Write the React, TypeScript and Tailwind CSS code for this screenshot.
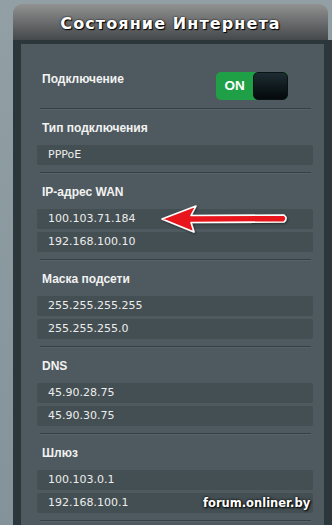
import React from "react";

const label = "text-[12px] leading-[15px] font-bold text-[#f2f2f2] [font-family:'Liberation_Sans',Arial,sans-serif]";
const value = "text-[11px] text-[#ececec] [font-family:'DejaVu_Sans',Verdana,sans-serif]";

function Sep() {
  return <div className="mx-[13px] ml-[19px] h-[2px] border-t border-[#363f43] border-b border-b-[#56636a]" />;
}

function Box({ v }: { v: string }) {
  return (
    <div className={`ml-[16px] mr-[11px] h-[20px] rounded-[2px] bg-[#444f53] pl-[11px] flex items-center ${value}`}>
      {v}
    </div>
  );
}

function Section({ title, values }: { title: string; values: string[] }) {
  return (
    <>
      <div className="pt-[11px] pb-[7px]">
        <div className={`pl-[21px] mb-[9px] ${label}`}>{title}</div>
        <div className="flex flex-col gap-[3px]">
          {values.map((v) => (
            <Box key={v} v={v} />
          ))}
        </div>
      </div>
      <Sep />
    </>
  );
}

export default function App() {
  return (
    <div className="relative w-[332px] h-[525px] overflow-hidden bg-gradient-to-b from-[#92a0a5] to-[#84939a]">
      <div className="ml-[13px] pt-[4px]">
        <div className="h-[36px] w-[315px] rounded-t-[9px] bg-gradient-to-b from-[#929292] via-[#6b6c6d] to-[#45494b] flex items-center justify-center pt-[3px]">
          <span className="text-[16px] font-bold tracking-[1.1px] text-white [text-shadow:1px_1px_1px_#000,0_0_2px_#000] [font-family:'DejaVu_Sans',Verdana,sans-serif]">
            Состояние Интернета
          </span>
        </div>
        <div className="bg-[#2c373b] pl-[8px] pt-[4px] h-[500px] w-[319px]">
          <div className="w-[303px] h-[496px] bg-[#4e5a5f]">
            <div className="pt-[28px] pb-[8px] pl-[21px] flex items-start">
              <div className={label}>Подключение</div>
              <div className="ml-auto mr-[36px] w-[72px] h-[28px] rounded-[5px] bg-[#1fa046] flex items-center">
                <span className="w-[37px] text-center text-[13.5px] font-bold text-white [font-family:'Liberation_Sans',Arial,sans-serif]">
                  ON
                </span>
                <div className="w-[35px] h-[28px] rounded-[5px] bg-gradient-to-b from-[#1d2d33] to-[#05090b] border border-[#0a1215]" />
              </div>
            </div>
            <Sep />
            <Section title="Тип подключения" values={["PPPoE"]} />
            <Section title="IP-адрес WAN" values={["100.103.71.184", "192.168.100.10"]} />
            <Section title="Маска подсети" values={["255.255.255.255", "255.255.255.0"]} />
            <Section title="DNS" values={["45.90.28.75", "45.90.30.75"]} />
            <Section title="Шлюз" values={["100.103.0.1", "192.168.100.1"]} />
          </div>
        </div>
      </div>

      <svg className="absolute left-0 top-0 pointer-events-none" width="332" height="525" viewBox="0 0 332 525">
        <defs>
          <filter id="sh" x="-10%" y="-30%" width="120%" height="160%">
            <feDropShadow dx="1" dy="1" stdDeviation="1" floodColor="#000" floodOpacity="0.45" />
          </filter>
        </defs>
        <path
          d="M162 219 L196 206 L191 215.5 L284 215 Q288 218.5 284 222 L191 222.5 L194 232 Z"
          fill="#e8161b"
          stroke="#ffffff"
          strokeWidth="1.6"
          strokeLinejoin="round"
          filter="url(#sh)"
        />
      </svg>

      <div className="absolute left-[203px] top-[495px] text-[11.5px] font-bold text-white [text-shadow:1px_1px_2px_#000,0_0_3px_#000] [font-family:'DejaVu_Sans',Verdana,sans-serif]">
        forum.onliner.by
      </div>
    </div>
  );
}
